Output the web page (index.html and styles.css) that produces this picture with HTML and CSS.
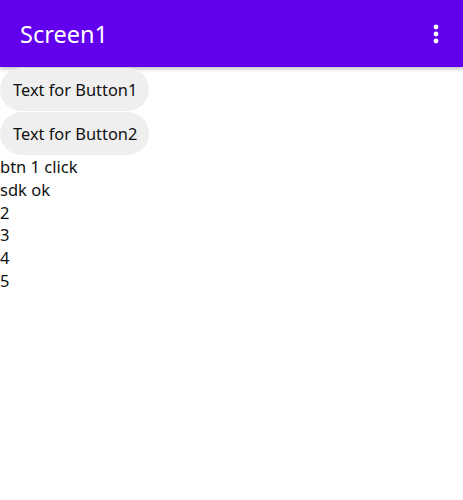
FILE: index.html
```html
<!DOCTYPE html>
<html lang="en">
  <head>
    <meta charset="UTF-8" />
    <meta name="viewport" content="width=device-width, initial-scale=1.0" />
    <title>Screen1</title>
    <link rel="stylesheet" href="styles.css">
  </head>
  <body>
    <header class="app-bar">
      <h1 class="title">Screen1</h1>
      <button class="menu-button" aria-label="More options">
        <svg width="6" height="20" viewBox="0 0 6 20">
          <circle cx="3" cy="3" r="2.4" fill="#fff" />
          <circle cx="3" cy="10" r="2.4" fill="#fff" />
          <circle cx="3" cy="17" r="2.4" fill="#fff" />
        </svg>
      </button>
    </header>
    <main class="content">
      <button class="btn">Text for Button1</button>
      <button class="btn">Text for Button2</button>
      <div class="label">btn 1 click</div>
      <div class="label">sdk ok</div>
      <div class="label">2</div>
      <div class="label">3</div>
      <div class="label">4</div>
      <div class="label">5</div>
    </main>
  </body>
</html>
```

FILE: styles.css
```css
body {
  margin: 0;
  font-family: "Noto Sans", Roboto, sans-serif;
  background: #fff;
}

.app-bar {
  height: 67px;
  background-color: #6200ee;
  display: flex;
  align-items: center;
  justify-content: space-between;
  padding: 0 20px;
  box-shadow: 0 2px 4px rgba(0, 0, 0, 0.25);
}
.title {
  margin: 0;
  color: #fff;
  font-size: 23.5px;
  font-weight: normal;
}
.menu-button {
  background: none;
  border: none;
  padding: 0;
  margin-right: 4px;
  display: flex;
}

.content {
  display: flex;
  flex-direction: column;
  align-items: flex-start;
  padding-top: 1px;
}
.btn {
  font-family: inherit;
  font-size: 16.4px;
  color: #111;
  background-color: #efefef;
  border: none;
  border-radius: 22px;
  height: 43px;
  padding: 0 12px 0 13px;
  margin-bottom: 1px;
}
.label {
  font-size: 16.5px;
  line-height: 22.8px;
  color: #111;
}
```
